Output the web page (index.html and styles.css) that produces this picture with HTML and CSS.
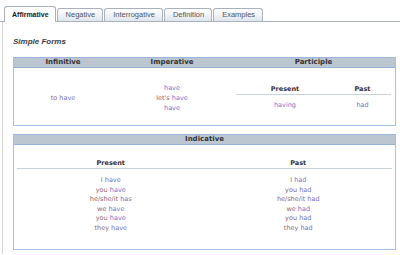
FILE: index.html
```html
<!DOCTYPE html>
<html lang="en">
<head>
    <meta charset="UTF-8">
    <title>to have - Conjugation</title>
    <link rel="stylesheet" href="styles.css">
</head>
<body>

<div class="tabs">
    <div class="tab active">Affirmative</div>
    <div class="tab">Negative</div>
    <div class="tab">Interrogative</div>
    <div class="tab">Definition</div>
    <div class="tab">Examples</div>
</div>

<div class="panel">
    <div class="section-title">Simple Forms</div>

    <div class="box">
        <div class="box-head forms-cols">
            <span>Infinitive</span>
            <span>Imperative</span>
            <span>Participle</span>
        </div>
        <div class="box-body forms-cols forms-body">
            <div class="cell"><span class="pr">to</span> <span class="vb">have</span></div>
            <div class="cell lines">
                <span class="vb">have</span>
                <span><span class="pr2">let's</span> <span class="vb">have</span></span>
                <span class="vb">have</span>
            </div>
            <div class="participle">
                <div class="two-cols sub-head participle-cols">
                    <span>Present</span>
                    <span>Past</span>
                </div>
                <div class="two-cols participle-cols participle-row">
                    <span class="vb">having</span>
                    <span class="vb">had</span>
                </div>
            </div>
        </div>
    </div>

    <div class="box indicative">
        <div class="box-head">
            <span>Indicative</span>
        </div>
        <div class="box-body indicative-body">
            <div class="two-cols sub-head">
                <span>Present</span>
                <span>Past</span>
            </div>
            <div class="two-cols persons">
                <div class="lines">
                    <span><span class="pr">I</span> <span class="vb">have</span></span>
                    <span><span class="pr">you</span> <span class="vb">have</span></span>
                    <span><span class="pr">he/she/it</span> <span class="vb">has</span></span>
                    <span><span class="pr">we</span> <span class="vb">have</span></span>
                    <span><span class="pr">you</span> <span class="vb">have</span></span>
                    <span><span class="pr">they</span> <span class="vb">have</span></span>
                </div>
                <div class="lines">
                    <span><span class="pr">I</span> <span class="vb">had</span></span>
                    <span><span class="pr">you</span> <span class="vb">had</span></span>
                    <span><span class="pr">he/she/it</span> <span class="vb">had</span></span>
                    <span><span class="pr">we</span> <span class="vb">had</span></span>
                    <span><span class="pr">you</span> <span class="vb">had</span></span>
                    <span><span class="pr">they</span> <span class="vb">had</span></span>
                </div>
            </div>
        </div>
    </div>
</div>

</body>
</html>
```

FILE: styles.css
```css
body {
    margin: 0;
    background-color: #fff;
    font-family: "DejaVu Sans", Verdana, sans-serif;
    font-size: 6.5px;
    width: 400px;
    overflow: hidden;
}

/* tab strip */
.tabs {
    display: flex;
    align-items: flex-end;
    gap: 1px;
    padding: 6px 0 0 4px;
    border-bottom: 1px solid #a9b2bb;
    height: 15px;
}

.tab {
    font-family: "Liberation Sans", Arial, sans-serif;
    font-size: 7.5px;
    color: #555;
    height: 12px;
    line-height: 12px;
    padding: 0 7px 0 8px;
    border: 1px solid #a9b2bb;
    border-bottom: none;
    border-radius: 3px 3px 0 0;
    background: linear-gradient(#ffffff, #dfe6ee);
}

.tab.active {
    font-size: 7px;
    font-weight: bold;
    color: #1a1a1a;
    height: 15px;
    line-height: 16px;
    background: #fff;
    margin-bottom: -1px;
    padding: 0 6px 0 7px;
}

/* content area */
.panel {
    margin-left: 2px;
    border-left: 1px solid #d6d6d6;
    padding: 15px 4px 4px 10px;
}

.section-title {
    font-family: "Liberation Sans", Arial, sans-serif;
    font-size: 8px;
    font-weight: bold;
    font-style: italic;
    color: #3d3d45;
    line-height: 10px;
    margin-bottom: 10px;
}

.box {
    border: 1px solid #a6c0e4;
    border-top-color: #9bb6dc;
}

.box-head {
    background-color: #bcc6d0;
    border-bottom: 1px solid #97b3dc;
    height: 9px;
    line-height: 9px;
    font-size: 7px;
    font-weight: bold;
    color: #333;
    text-align: center;
}

.forms-cols {
    display: grid;
    grid-template-columns: 98px 120px 1fr;
}

.forms-body {
    height: 57px;
    align-items: center;
}

.cell {
    text-align: center;
    padding-top: 2px;
}

.lines {
    display: flex;
    flex-direction: column;
    align-items: center;
    line-height: 10px;
}

.participle {
    margin: 0 4px;
    padding-top: 2px;
}

.two-cols {
    display: grid;
    grid-template-columns: 1fr 1fr;
    text-align: center;
}

.participle-cols {
    grid-template-columns: 98px 1fr;
}

.participle-row {
    padding-top: 6px;
    line-height: 9px;
}

.sub-head {
    font-weight: bold;
    color: #3a2c30;
    line-height: 9px;
    border-bottom: 1px solid #c9d3de;
}

/* pronouns brownish, verb forms blue */
.pr {
    color: #8e6670;
}

.pr2 {
    color: #a05c64;
}

.vb {
    color: #7474c8;
}

/* indicative table */
.indicative {
    margin-top: 8px;
}

.indicative-body {
    height: 104px;
    padding: 14px 3px 0 3px;
    box-sizing: border-box;
}

.persons {
    padding-top: 7px;
}

.persons .lines {
    line-height: 9.6px;
}
```
